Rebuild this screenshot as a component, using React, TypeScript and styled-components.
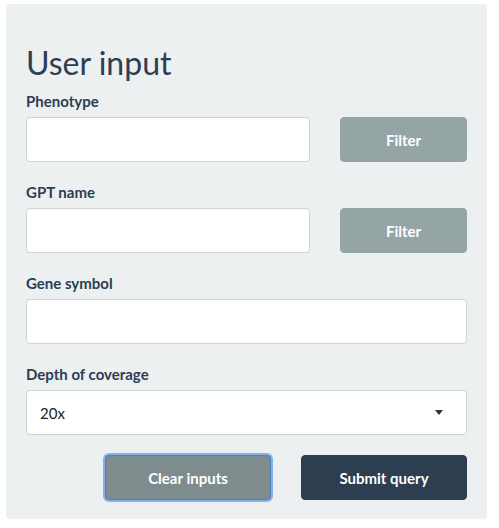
import React from 'react';
import styled, { createGlobalStyle } from 'styled-components';

const GlobalStyle = createGlobalStyle`
  body {
    margin: 0;
    background: #ffffff;
    font-family: Lato, "Liberation Sans", sans-serif;
    font-size: 15px;
    color: #2c3e50;
  }
`;

const Panel = styled.div`
  box-sizing: border-box;
  width: 481px;
  margin: 4px 0 0 6px;
  padding: 19px 20px 19px 20px;
  background: #ecf0f1;
  border-radius: 4px;
`;

const Title = styled.h3`
  margin: 22px 0 11px;
  font-size: 32px;
  font-weight: 400;
  line-height: 1.1;
  color: #2c3e50;
`;

const Group = styled.div`
  display: grid;
  grid-template-columns: repeat(3, 1fr);
  column-gap: 30px;
  margin-bottom: 20px;
`;

const Field = styled.div<{ $span: number }>`
  grid-column: span ${p => p.$span};
  display: flex;
  flex-direction: column;
`;

const Label = styled.label`
  font-weight: 700;
  font-size: 15px;
  line-height: 21px;
  margin-bottom: 5px;
`;

const Input = styled.input`
  box-sizing: border-box;
  height: 45px;
  width: 100%;
  padding: 10px 15px;
  border: 1px solid #cfd4d5;
  border-radius: 4px;
  background: #fff;
  font: inherit;
  outline: none;
`;

const Select = styled.div`
  box-sizing: border-box;
  height: 45px;
  display: flex;
  align-items: center;
  justify-content: space-between;
  padding: 0 23px 0 13px;
  border: 1px solid #cfd4d5;
  border-radius: 4px;
  background: #fff;
  color: #222;
  font-size: 15px;
`;

const Caret = styled.span`
  width: 0;
  height: 0;
  border-left: 4px solid transparent;
  border-right: 4px solid transparent;
  border-top: 5px solid #333;
`;

const Button = styled.button<{ $bg: string; $focus?: boolean }>`
  box-sizing: border-box;
  height: 45px;
  border: 1px solid ${p => (p.$focus ? '#4f7fb8' : p.$bg)};
  border-radius: 4px;
  background: ${p => p.$bg};
  color: #fff;
  font-family: Lato, "Liberation Sans", sans-serif;
  font-size: 15px;
  font-weight: 700;
  box-shadow: ${p => (p.$focus ? '0 0 0 2px #7fb2ee' : 'none')};
`;

const FilterSlot = styled.div`
  display: flex;
  flex-direction: column;
  justify-content: flex-end;
`;

const Actions = styled.div`
  display: flex;
  justify-content: flex-end;
  gap: 30px;

  ${Button} {
    width: 166px;
  }
`;

const App: React.FC = () => {
  return (
    <>
      <GlobalStyle />
      <Panel>
        <Title>User input</Title>
        <Group>
          <Field $span={2}>
            <Label>Phenotype</Label>
            <Input />
          </Field>
          <FilterSlot>
            <Button $bg="#95a5a6">Filter</Button>
          </FilterSlot>
        </Group>
        <Group>
          <Field $span={2}>
            <Label>GPT name</Label>
            <Input />
          </Field>
          <FilterSlot>
            <Button $bg="#95a5a6">Filter</Button>
          </FilterSlot>
        </Group>
        <Group>
          <Field $span={3}>
            <Label>Gene symbol</Label>
            <Input />
          </Field>
        </Group>
        <Group>
          <Field $span={3}>
            <Label>Depth of coverage</Label>
            <Select>
              <span>20x</span>
              <Caret />
            </Select>
          </Field>
        </Group>
        <Actions>
          <Button $bg="#7f8c8d" $focus>Clear inputs</Button>
          <Button $bg="#2c3e50">Submit query</Button>
        </Actions>
      </Panel>
    </>
  );
};

export default App;
